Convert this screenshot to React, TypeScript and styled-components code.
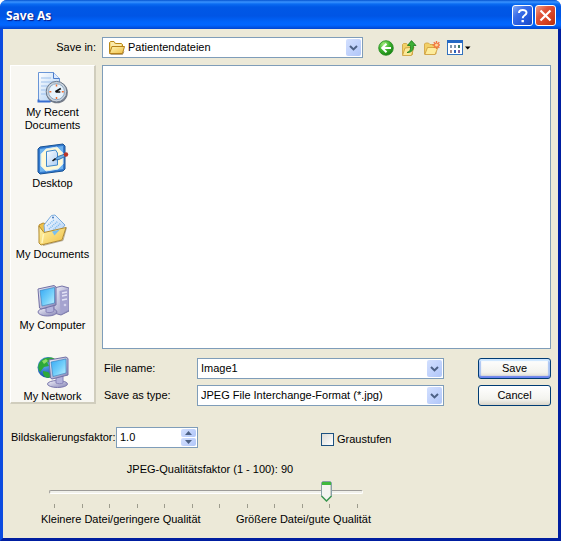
import React, { useState } from "react";
import styled, { createGlobalStyle, css } from "styled-components";

const Global = createGlobalStyle`
  *, *::before, *::after { box-sizing: border-box; }
  body { margin: 0; background: #fff; }
  body, button, input, select { font: 11px/13px "Liberation Sans", Arial, sans-serif; color: #000; }
  svg { display: block; flex: none; }
`;

const Window = styled.main`
  min-height: 100vh;
  display: flex;
  flex-direction: column;
  border-radius: 7px 7px 0 0;
  overflow: hidden;
  background: #0a46d8;
`;

const TitleBar = styled.header`
  height: 29px;
  display: flex;
  align-items: center;
  gap: 2px;
  padding: 2px 5px 0 6px;
  background: linear-gradient(#0453d0 0, #3a93ff 2px, #0a6cf2 4px, #0058e6 7px, #0055e5 16px, #0064fb 22px, #0166ff 25px, #0144cf 29px);
`;

const Title = styled.h1`
  flex: 1;
  margin: 0;
  font: bold 12px/16px "Noto Sans", "Open Sans", sans-serif;
  color: #fff;
  text-shadow: 1px 1px 1px #0a1883;
`;

const CaptionButton = styled.button<{ $close?: boolean }>`
  width: 21px;
  height: 21px;
  padding: 0;
  display: grid;
  place-items: center;
  border: 1px solid #fff;
  border-radius: 3px;
  background: ${(p) =>
    p.$close
      ? "linear-gradient(135deg, #f0a088, #e0543a 35%, #d5401f 70%, #b43010)"
      : "linear-gradient(135deg, #83a8f5, #3b6ee8 35%, #2458dd 70%, #1a48c0)"};
`;

const Body = styled.form`
  flex: 1;
  display: flex;
  flex-direction: column;
  margin: 0;
  padding: 8px 7px 12px;
  background: #ece9d8;
  border: solid;
  border-width: 0 3px 3px;
  border-color: #0b4be0 #001ea0 #001ea0 #0b4be0;
`;

const LookInRow = styled.div`
  display: grid;
  grid-template-columns: 86px minmax(0, 261px) auto;
  column-gap: 6px;
  align-items: center;
  justify-content: start;
`;

const RightLabel = styled.label`
  text-align: right;
`;

const Toolbar = styled.div`
  display: flex;
  gap: 7px;
  padding-left: 9px;
`;

const ToolButton = styled.button`
  display: flex;
  align-items: center;
  gap: 1px;
  padding: 0;
  border: 0;
  background: none;
`;

const Main = styled.div`
  flex: 1;
  display: grid;
  grid-template-columns: 86px minmax(0, 1fr);
  column-gap: 6px;
  margin-top: 7px;
`;

const Places = styled.nav`
  contain: size;
  overflow: hidden;
  padding-top: 6px;
  margin-bottom: 2px;
  background: #f8f7f2;
  border: solid;
  border-width: 1px 2px 2px 1px;
  border-color: #fff #d0cdbd #d0cdbd #fff;
`;

const Place = styled.a`
  height: 71px;
  display: flex;
  flex-direction: column;
  align-items: center;
  gap: 2px;
  color: #000;
  text-align: center;
  text-decoration: none;
`;

const PlaceName = styled.span`
  max-width: 76px;
`;

const Content = styled.div`
  display: flex;
  flex-direction: column;
  gap: 9px;
`;

const FileList = styled.div`
  flex: 1;
  min-height: 120px;
  background: #fff;
  border: 1px solid #7f9db9;
`;

const Fields = styled.div`
  display: grid;
  grid-template-columns: 93px minmax(0, 247px) 107px;
  justify-content: start;
  align-items: center;
  row-gap: 6px;
  padding-left: 2px;
`;

const PushButton = styled.button<{ $default?: boolean }>`
  width: 73px;
  height: 21px;
  padding: 0;
  border: 1px solid #003c74;
  border-radius: 3px;
  background: linear-gradient(#fff, #f3f3ee 70%, #d9d5ca);
  ${(p) => p.$default && css`box-shadow: inset 0 2px 1px #cee7ff, inset 0 -2px 1px #6982ee, inset 2px 0 1px #a9c4f2, inset -2px 0 1px #a9c4f2;`}
`;

const ButtonCell = styled.div`
  margin-left: 34px;
`;

const Combo = styled.div`
  position: relative;
  display: flex;
  height: 21px;
  background: #fff;
  border: 1px solid #7f9db9;
`;

const comboText = css`
  flex: 1;
  min-width: 0;
  width: 100%;
  border: 0;
  outline: 0;
  margin: 0;
  background: transparent;
  appearance: none;
`;

const ComboSelect = styled.select<{ $icon?: boolean }>`
  ${comboText}
  padding: 0 18px 0 ${(p) => (p.$icon ? 25 : 3)}px;
`;

const TextInput = styled.input`
  ${comboText}
  padding: 0 3px;
`;

const FolderMark = styled.span`
  position: absolute;
  left: 5px;
  top: 1px;
  pointer-events: none;
`;

const arrowBox = css`
  display: grid;
  place-items: center;
  padding: 0;
  border: 0;
  border-radius: 2px;
  background: linear-gradient(135deg, #d3e0fe, #c2d3fc 50%, #b0c6f8);
`;

const ComboArrow = styled.span`
  ${arrowBox}
  position: absolute;
  right: 1px;
  top: 1px;
  bottom: 1px;
  width: 15px;
  pointer-events: none;
`;

const ComboButton = styled.button`
  ${arrowBox}
  width: 15px;
  margin: 1px;
`;

const OptionsRow = styled.div`
  display: grid;
  grid-template-columns: 102px 82px auto;
  column-gap: 3px;
  align-items: center;
  margin-top: 21px;
  padding-left: 1px;
  white-space: nowrap;
`;

const SpinButtons = styled.div`
  width: 15px;
  margin: 1px;
  display: grid;
  grid-template-rows: 1fr 1fr;
  gap: 1px;
`;

const SpinButton = styled.button`
  ${arrowBox}
`;

const CheckLabel = styled.label`
  display: flex;
  align-items: center;
  gap: 3px;
  margin: 4px 0 0 120px;
`;

const CheckBox = styled.input`
  appearance: none;
  width: 13px;
  height: 13px;
  margin: 0;
  border: 1px solid #1c5180;
  background: linear-gradient(135deg, #dcdcd7, #fff);
  &:checked { background: #21a121; }
`;

const Quality = styled.div`
  width: 60%;
  min-width: 330px;
  margin: 15px 0 0 31px;
  display: flex;
  flex-direction: column;
`;

const QualityLabel = styled.label`
  align-self: center;
  padding-left: 8px;
`;

const SliderBox = styled.div`
  position: relative;
  width: 314px;
  height: 22px;
  margin: 5px 0 0 8px;
`;

const Range = styled.input`
  appearance: none;
  display: block;
  width: 100%;
  height: 22px;
  margin: 0;
  background: transparent;
  &::-webkit-slider-runnable-track {
    height: 4px;
    border: 1px solid;
    border-color: #9d9c99 #fff #fff #9d9c99;
    border-radius: 2px;
    background: #f0f0ea;
  }
  &::-webkit-slider-thumb {
    appearance: none;
    width: 11px;
    height: 21px;
    margin-top: -10px;
    opacity: 0;
  }
`;

const Thumb = styled.span`
  position: absolute;
  top: 0;
  pointer-events: none;
`;

const Ticks = styled.div`
  width: 314px;
  display: flex;
  justify-content: space-between;
  margin: 1px 0 0 8px;
  padding: 0 5px;
`;

const Tick = styled.span`
  width: 1px;
  height: 4px;
  background: #9d9c8d;
`;

const Extremes = styled.div`
  display: flex;
  justify-content: space-between;
  margin-top: 5px;
`;

const Chevron = () => (
  <svg width="9" height="6" viewBox="0 0 9 6">
    <path d="M1 1l3.5 3.4L8 1" fill="none" stroke="#4d6185" strokeWidth="2" />
  </svg>
);

const Folder = () => (
  <svg width="17" height="17" viewBox="0 0 17 17">
    <defs>
      <linearGradient id="folder" x1="0" y1="0" x2="1" y2="1">
        <stop stopColor="#fff6b5" />
        <stop offset="1" stopColor="#eebd45" />
      </linearGradient>
    </defs>
    <path d="M1.5 13.500V3.500l1-1H6l1.500 2h6l1 1v8z" fill="#f5d877" stroke="#b98818" />
    <path d="M1.500 14.500L4 7.500h12.500l-2 7z" fill="url(#folder)" stroke="#b5811a" />
    <path d="M2.500 15.500h12l1.500-3" fill="none" stroke="#8d6a2b" strokeOpacity=".6" />
    <path d="M3 4h3M3 6h10" stroke="#fffbe0" />
  </svg>
);

const BackIcon = () => (
  <svg width="16" height="16" viewBox="0 0 16 16">
    <defs>
      <radialGradient id="back" cx=".35" cy=".25" r=".8">
        <stop stopColor="#a6ec80" />
        <stop offset=".5" stopColor="#3eb52e" />
        <stop offset="1" stopColor="#168012" />
      </radialGradient>
    </defs>
    <circle cx="8" cy="8" r="7.3" fill="url(#back)" stroke="#258a20" strokeWidth=".8" />
    <path d="M8.500 3.800L4.200 8l4.300 4.200M4.500 8H13" fill="none" stroke="#fff" strokeWidth="2" />
  </svg>
);

const UpIcon = () => (
  <svg width="16" height="16" viewBox="0 0 16 16">
    <path d="M1.500 14.500V4.500l1-1h3l1 1h5v10z" fill="#f2d168" stroke="#cda03a" strokeWidth=".8" />
    <path d="M1.500 15.500L4 8l9-1-2.500 8.500z" fill="#fbe896" stroke="#c99a35" strokeWidth=".8" />
    <path d="M6 12.500c3.500-1 3.800-3.500 3.300-7H6.500L10.500.6 15 5.500h-2.700c.4 4-1 7-6.300 7z" fill="#3db036" stroke="#167818" strokeWidth=".8" />
  </svg>
);

const NewFolderIcon = () => (
  <svg width="16" height="16" viewBox="0 0 16 16">
    <path d="M.5 14V4l1-1h3L6 4.500h6V14z" fill="#f2d067" stroke="#d0a03c" strokeWidth=".8" />
    <path d="M.8 14.500L3.500 7.500h10.500l-3 7z" fill="#fdec9c" stroke="#cb9b38" strokeWidth=".8" />
    <path d="M12.500 1v8M8.500 5h7.500M9.800 2.200l5.500 5.500M15.300 2.200L9.800 7.700" stroke="#f17440" strokeWidth="1.400" />
    <circle cx="12.500" cy="5" r="1.500" fill="#ffd995" />
  </svg>
);

const ViewsIcon = () => (
  <>
    <svg width="16" height="15" viewBox="0 0 16 15">
      <rect x=".5" y=".5" width="15" height="14" fill="#fff" stroke="#3272bd" />
      <path d="M0 1.500h16" stroke="#2469c4" strokeWidth="3" />
      <path d="M3 5h2v3H3zM7 5h2v3H7z" fill="#8096ad" />
      <path d="M11 5h2v3h-2z" fill="#427f65" />
      <path d="M3 10h2v3H3z" fill="#a98b87" />
      <path d="M7 10h2v3H7z" fill="#2762bd" />
      <path d="M11 10h2v3h-2z" fill="#87639c" />
    </svg>
    <svg width="7" height="4" viewBox="0 0 7 4">
      <path d="M1 .5h5.500L3.700 3.500z" />
    </svg>
  </>
);

const Shades = () => (
  <svg width="0" height="0" aria-hidden="true">
    <defs>
      <linearGradient id="paper" x1="0" y1="0" x2="1" y2="1">
        <stop stopColor="#fff" />
        <stop offset="1" stopColor="#a9ccf3" />
      </linearGradient>
      <linearGradient id="screen" x1="0" y1="0" x2="1" y2="1">
        <stop stopColor="#35a8f4" />
        <stop offset=".55" stopColor="#73cffa" />
        <stop offset="1" stopColor="#c3f3ff" />
      </linearGradient>
      <linearGradient id="plastic" x1="0" y1="0" x2="1" y2="1">
        <stop stopColor="#f1f1fa" />
        <stop offset="1" stopColor="#8584b5" />
      </linearGradient>
      <linearGradient id="gold" x1="0" y1="0" x2="1" y2="1">
        <stop stopColor="#fff6b0" />
        <stop offset="1" stopColor="#f0bf42" />
      </linearGradient>
      <radialGradient id="globe" cx=".35" cy=".35" r=".7">
        <stop stopColor="#64b4f5" />
        <stop offset="1" stopColor="#0b41a5" />
      </radialGradient>
    </defs>
  </svg>
);

const RecentIcon = () => (
  <svg width="32" height="32" viewBox="0 0 32 32">
    <path d="M1.500.5h15l6 6v23h-21z" fill="url(#paper)" stroke="#6995d7" />
    <path d="M16.500.5v6h6" fill="#dceaff" stroke="#4c7cc9" />
    <path d="M4 6h10M4 10h14M4 14h8M4 18h5M4 22h5" stroke="#9cbfeb" />
    <path d="M1.500 27.500v2h12" stroke="#386ecf" fill="none" strokeWidth="2" />
    <circle cx="20" cy="20.500" r="10.800" fill="#777d88" />
    <circle cx="19.500" cy="19.700" r="10.300" fill="#c9d2dc" stroke="#6d7a8b" />
    <circle cx="19.500" cy="19.700" r="8" fill="#e7f3fd" stroke="#8fa8c0" />
    <path d="M19.500 12.500v2M19.500 25v2M12.300 19.700h2M24.800 19.700h2" stroke="#ee7035" strokeWidth="1.500" />
    <path d="M18.300 19.800l5.500-3.300M18.800 20h4.500" stroke="#111" strokeWidth="1.600" />
  </svg>
);

const DesktopIcon = () => (
  <svg width="32" height="32" viewBox="0 0 32 32">
    <path d="M1 6l2-2 23-3 2 2v23l-2 2-23 3-2-2z" fill="#347bd0" stroke="#185395" />
    <path d="M3 6l23-3v23L3 29z" fill="#6fb3ee" />
    <path d="M9 6l11-2 6 6v11l-5 5-12 2-5-5V11z" fill="#fff9d7" stroke="#d5e9f2" />
    <path d="M9.500 8.500l9-1.500 2 3v12l-11 1.500z" fill="url(#paper)" stroke="#3f88cb" />
    <path d="M17 17l4-3.500 7-2.500 1 2-7 3.500z" fill="#6fb0e6" stroke="#235c9b" strokeWidth=".8" />
    <path d="M15.500 18l3-2.500" stroke="#111" strokeWidth="1.600" />
    <circle cx="29" cy="11.500" r="2.200" fill="#bc3527" />
  </svg>
);

const DocumentsIcon = () => (
  <svg width="32" height="32" viewBox="0 0 32 32">
    <path d="M2 11l4-2 5 1.500L23 12 8 30l-5-1z" fill="#eec14b" stroke="#b78b2c" />
    <path d="M7 11L14.500 1.500l3.500-.5L28 11 18 24 8 22z" fill="url(#paper)" stroke="#7aabdc" />
    <path d="M10 12l7-6M12 15l9-8M15 17l9-8" stroke="#7bb9ee" strokeWidth="1.500" strokeDasharray="1 1" />
    <circle cx="16" cy="3.500" r="1" fill="#4178be" />
    <path d="M2 12l5 6.500L29 13.500 25 26 4 31 2 29z" fill="url(#gold)" stroke="#b18a31" />
    <path d="M15 17.500l8-2-5.500 6z" fill="#78bff0" />
    <path d="M6.500 20L5 29" stroke="#fff6bd" strokeWidth="1.500" />
    <path d="M6 31.500l20-5 3.500-13" fill="none" stroke="#79683f" strokeOpacity=".5" />
  </svg>
);

const ComputerIcon = () => (
  <svg width="32" height="32" viewBox="0 0 32 32">
    <path d="M17 3l8-2 7 2v23l-8 4-7-2z" fill="url(#plastic)" stroke="#7774a8" />
    <path d="M22.500 6l9-2v21l-8 4z" fill="#a5a3cf" />
    <path d="M25 8l5-1M25 11l5-1M25 15l5-1" stroke="#e3e3f6" strokeWidth="1.400" />
    <circle cx="28" cy="20" r="1.300" fill="#d4d3ed" />
    <ellipse cx="10.500" cy="27" rx="9.500" ry="4" fill="url(#plastic)" stroke="#7a77ac" />
    <path d="M9 21l7-1 1 6c-2 2-6 2-8 1z" fill="#b4b4dc" stroke="#8884b8" />
    <path d="M1 4l16-3.500 2 1.500v18L4 24l-1.500-1z" fill="url(#plastic)" stroke="#7270a5" />
    <path d="M3 5.500L17.500 2.500V18L5 21z" fill="url(#screen)" stroke="#347cba" strokeWidth=".6" />
  </svg>
);

const NetworkIcon = () => (
  <svg width="32" height="32" viewBox="0 0 32 32">
    <circle cx="11" cy="11.500" r="10.500" fill="url(#globe)" />
    <path d="M5 4c4-3 10-3 13-1l-4 4-4-1 2 4-5 1-4 5C0 12 1 7 5 4zM6 15l5 1 4 4-4 2C7 21 6 19 6 15z" fill="#2da83a" />
    <path d="M5 5l4-2 2 2-4 3z" fill="#8cdc66" />
    <ellipse cx="20.500" cy="28" rx="10" ry="3.500" fill="url(#plastic)" stroke="#7a77ac" />
    <path d="M19 21l7-1v7c-2 1-5 1-7 0z" fill="#b3b2db" stroke="#8884b8" />
    <path d="M12 4l17-3 2 1.500V19l-16 4-1.500-1z" fill="url(#plastic)" stroke="#7270a5" />
    <path d="M14 6l15-3v14L16 20.500z" fill="url(#screen)" stroke="#347cba" strokeWidth=".6" />
  </svg>
);

const ThumbShape = () => (
  <svg width="11" height="21" viewBox="0 0 11 21">
    <path d="M.5 1.500l1-1h8l1 1V15l-5 5-5-5z" fill="#f4f4f0" stroke="#889fa8" />
    <path d="M.5 15l5 5 5-5" fill="none" stroke="#3d9851" strokeWidth="1.500" />
    <path d="M9.500 4v11" stroke="#ccd0c8" />
    <path d="M1 1h9v3H1z" fill="#3fb83e" />
  </svg>
);

const places = [
  { name: "My Recent Documents", Icon: RecentIcon },
  { name: "Desktop", Icon: DesktopIcon },
  { name: "My Documents", Icon: DocumentsIcon },
  { name: "My Computer", Icon: ComputerIcon },
  { name: "My Network", Icon: NetworkIcon },
];

export default function App() {
  const [quality, setQuality] = useState(90);
  const [scale, setScale] = useState("1.0");
  const step = (d: number) => setScale((s) => Math.max(0.1, (parseFloat(s) || 1) + d).toFixed(1));

  return (
    <Window>
      <Global />
      <TitleBar>
        <Title>Save As</Title>
        <CaptionButton type="button" aria-label="Help">
          <svg width="13" height="15" viewBox="0 0 13 15">
            <path d="M3 5c0-4 7.500-4 7.500-.3C10.500 7.500 6.700 7 6.700 10.300" fill="none" stroke="#fff" strokeWidth="2" />
            <path d="M5.500 12h2.400v2.300H5.500z" fill="#fff" />
          </svg>
        </CaptionButton>
        <CaptionButton type="button" $close aria-label="Close">
          <svg width="13" height="13" viewBox="0 0 13 13">
            <path d="M1.500 1.500l10 10M11.500 1.500l-10 10" stroke="#fff" strokeWidth="2.200" />
          </svg>
        </CaptionButton>
      </TitleBar>
      <Body onSubmit={(e) => e.preventDefault()}>
        <Shades />
        <LookInRow>
          <RightLabel htmlFor="look-in">Save in:</RightLabel>
          <Combo>
            <FolderMark><Folder /></FolderMark>
            <ComboSelect id="look-in" $icon>
              <option>Patientendateien</option>
            </ComboSelect>
            <ComboArrow><Chevron /></ComboArrow>
          </Combo>
          <Toolbar>
            <ToolButton type="button" aria-label="Back"><BackIcon /></ToolButton>
            <ToolButton type="button" aria-label="Up One Level"><UpIcon /></ToolButton>
            <ToolButton type="button" aria-label="Create New Folder"><NewFolderIcon /></ToolButton>
            <ToolButton type="button" aria-label="View Menu"><ViewsIcon /></ToolButton>
          </Toolbar>
        </LookInRow>
        <Main>
          <Places>
            {places.map(({ name, Icon }) => (
              <Place key={name} href="#">
                <Icon />
                <PlaceName>{name}</PlaceName>
              </Place>
            ))}
          </Places>
          <Content>
            <FileList />
            <Fields>
              <label htmlFor="file-name">File name:</label>
              <Combo>
                <TextInput id="file-name" defaultValue="Image1" />
                <ComboButton type="button" aria-label="Recent names"><Chevron /></ComboButton>
              </Combo>
              <ButtonCell><PushButton type="submit" $default>Save</PushButton></ButtonCell>
              <label htmlFor="file-type">Save as type:</label>
              <Combo>
                <ComboSelect id="file-type">
                  <option>JPEG File Interchange-Format (*.jpg)</option>
                </ComboSelect>
                <ComboArrow><Chevron /></ComboArrow>
              </Combo>
              <ButtonCell><PushButton type="button">Cancel</PushButton></ButtonCell>
            </Fields>
          </Content>
        </Main>
        <OptionsRow>
          <label htmlFor="scale">Bildskalierungsfaktor:</label>
          <Combo>
            <TextInput id="scale" value={scale} onChange={(e) => setScale(e.target.value)} />
            <SpinButtons>
              <SpinButton type="button" aria-label="Increase" onClick={() => step(0.1)}>
                <svg width="7" height="4" viewBox="0 0 7 4"><path d="M0 4l3.500-4L7 4z" fill="#4d6185" /></svg>
              </SpinButton>
              <SpinButton type="button" aria-label="Decrease" onClick={() => step(-0.1)}>
                <svg width="7" height="4" viewBox="0 0 7 4"><path d="M0 0l3.500 4L7 0z" fill="#4d6185" /></svg>
              </SpinButton>
            </SpinButtons>
          </Combo>
          <CheckLabel>
            <CheckBox type="checkbox" />
            Graustufen
          </CheckLabel>
        </OptionsRow>
        <Quality>
          <QualityLabel htmlFor="quality">JPEG-Qualitätsfaktor (1 - 100): {quality}</QualityLabel>
          <SliderBox>
            <Range id="quality" type="range" min={1} max={100} value={quality} onChange={(e) => setQuality(Number(e.target.value))} />
            <Thumb style={{ left: `calc((100% - 11px) * ${(quality - 1) / 99})` }}><ThumbShape /></Thumb>
          </SliderBox>
          <Ticks>
            {Array.from({ length: 12 }, (_, i) => <Tick key={i} />)}
          </Ticks>
          <Extremes>
            <span>Kleinere Datei/geringere Qualität</span>
            <span>Größere Datei/gute Qualität</span>
          </Extremes>
        </Quality>
      </Body>
    </Window>
  );
}
